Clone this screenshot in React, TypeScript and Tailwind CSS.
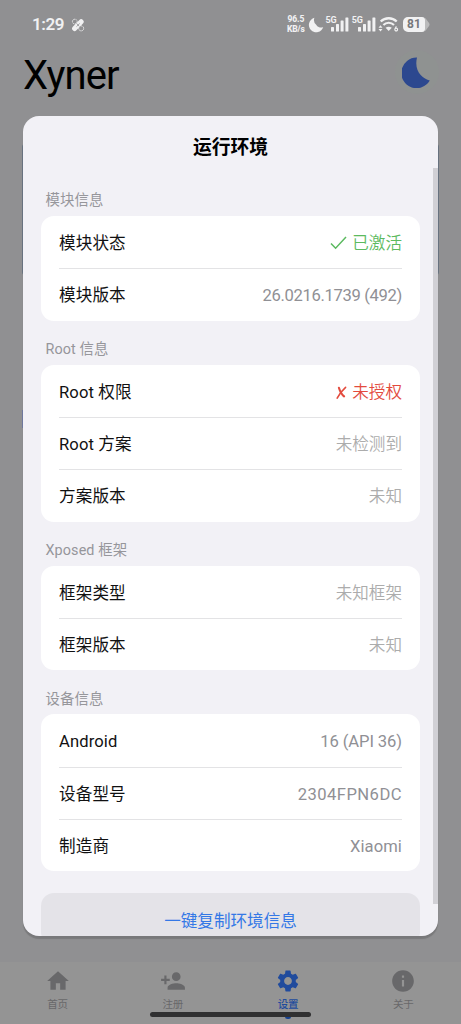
import type { ReactNode } from 'react';
import { MdHome, MdPersonAdd, MdSettings, MdInfo } from 'react-icons/md';

type Tone = 'value' | 'muted' | 'ok' | 'bad';

interface Row {
  label: string;
  value: string;
  tone: Tone;
  spacing?: string;
}

interface Section {
  title: string;
  rows: Row[];
}

const sections: Section[] = [
  {
    title: '模块信息',
    rows: [
      { label: '模块状态', value: '已激活', tone: 'ok' },
      { label: '模块版本', value: '26.0216.1739 (492)', tone: 'value', spacing: 'tracking-[-0.34px]' },
    ],
  },
  {
    title: 'Root 信息',
    rows: [
      { label: 'Root 权限', value: '未授权', tone: 'bad' },
      { label: 'Root 方案', value: '未检测到', tone: 'muted' },
      { label: '方案版本', value: '未知', tone: 'muted' },
    ],
  },
  {
    title: 'Xposed 框架',
    rows: [
      { label: '框架类型', value: '未知框架', tone: 'muted' },
      { label: '框架版本', value: '未知', tone: 'muted' },
    ],
  },
  {
    title: '设备信息',
    rows: [
      { label: 'Android', value: '16 (API 36)', tone: 'value', spacing: 'tracking-[-0.1px]' },
      { label: '设备型号', value: '2304FPN6DC', tone: 'value', spacing: 'tracking-[0.45px]' },
      { label: '制造商', value: 'Xiaomi', tone: 'value', spacing: 'tracking-[0.1px]' },
    ],
  },
];

const toneClass: Record<Tone, string> = {
  value: 'font-normal text-[#909095]',
  muted: 'font-[350] text-[#acacac]',
  ok: 'font-[350] text-[#5cba60]',
  bad: 'font-[350] text-[#e34b3e]',
};

function CheckMark() {
  return (
    <svg width="17" height="14" viewBox="0 0 17 14" className="-mt-[2px]" fill="none" stroke="#5cba60" strokeWidth="1.5">
      <path d="M1 7.4 5.6 12.2 16 1" />
    </svg>
  );
}

function BallotCross() {
  return (
    <svg width="11" height="14" viewBox="0 0 11 14" className="mt-px" fill="none" stroke="#e34b3e" strokeLinecap="round">
      <path d="M2.9 1.8C3.8 4.8 5.6 8.5 8.1 10.4" strokeWidth="2.1" />
      <path d="M9.6 1.4C6.4 4.2 3.4 8 1.2 12.2" strokeWidth="1.6" />
    </svg>
  );
}

function SignalBars() {
  return (
    <div className="relative h-[17px] w-[26.3px]">
      <svg width="26" height="17" viewBox="0 0 26 17" fill="#f1f1f2">
        <rect x="6" y="11" width="3" height="4.5" rx="0.6" />
        <rect x="11" y="8" width="3" height="7.5" rx="0.6" />
        <rect x="15.6" y="4.5" width="3" height="11" rx="0.6" />
        <rect x="20.4" y="1.5" width="3" height="14" rx="0.6" />
      </svg>
      <span className="absolute left-0 top-0 text-[9px] font-bold leading-[8px] text-[#f1f1f2]">5G</span>
    </div>
  );
}

function StatusBar() {
  return (
    <div className="flex h-12 items-center pl-8 pr-[31px] pt-px text-[#f1f1f2]">
      <span className="w-[36px] text-[17px] font-semibold leading-none tracking-[-0.4px]">1:29</span>
      <svg className="ml-[3px]" width="14" height="14" viewBox="0 0 14 14" fill="none" stroke="#f1f1f2">
        <circle cx="3.8" cy="3.6" r="2.4" strokeWidth="1" strokeDasharray="1.4 0.8" />
        <circle cx="10.2" cy="10.4" r="2.5" strokeWidth="1" strokeDasharray="1.4 0.8" />
        <path d="M3.6 10.5 10.2 3.7" strokeWidth="5" strokeLinecap="round" />
        <path d="M5.6 5.4 8.4 8.5M8.7 5.5 5.5 8.6" stroke="#919193" strokeWidth="0.8" />
      </svg>
      <div className="ml-auto flex items-center">
        <div className="flex w-[19px] flex-col items-center text-[8.5px] font-extrabold leading-[9.5px] tracking-[-0.1px]">
          <span>96.5</span>
          <span>KB/s</span>
        </div>
        <svg className="ml-[3px]" width="16" height="16" viewBox="0 0 16 16" fill="#f1f1f2">
          <path d="M6.4.8A7.3 7.3 0 1 0 15.2 9.9 5.5 5.5 0 0 1 8 7.5 6.2 6.2 0 0 1 6.4.8Z" />
        </svg>
        <div className="ml-px flex">
          <SignalBars />
          <SignalBars />
        </div>
        <svg width="21" height="17" viewBox="0 0 21 17" fill="none" stroke="#f1f1f2">
          <path d="M2.7 5.5A11.5 11.5 0 0 1 18.7 5.5" strokeWidth="2.3" />
          <path d="M5.4 9A7.4 7.4 0 0 1 16 9" strokeWidth="2.1" />
          <path d="M7.6 11.8Q10.7 9.5 13.8 11.8L10.7 15Z" fill="#f1f1f2" stroke="none" />
          <path d="M2.5 9.2 4.5 11.7H.5ZM2.5 15.6.5 13H4.5Z" fill="#f1f1f2" stroke="none" />
          <path d="M18.4 10.4 16.8 13M16.8 13.5a1.4 1.4 0 1 0 2.8 0 1.4 1.4 0 0 0-2.8 0Z" strokeWidth="1.1" />
        </svg>
        <div className="ml-[4px] flex items-center">
          <div className="h-[15px] w-[22px] rounded-l-[5px] rounded-r-[3px] bg-[#f1f1f2] text-center text-[12px] font-bold leading-[15.5px] text-[#77777a]">
            81
          </div>
          <svg width="5" height="13" viewBox="0 0 5 13" fill="#bababb">
            <path d="M0 0Q1 .5 1.8 2L4.2 5.2Q5 6.5 4.2 7.8L1.8 11Q1 12.5 0 13Z" />
          </svg>
        </div>
      </div>
    </div>
  );
}

function NavItem({ icon, label, active }: { icon: ReactNode; label: string; active?: boolean }) {
  return (
    <div className={`relative flex flex-1 flex-col items-center pt-[6px] ${active ? 'text-[#204b9d]' : 'text-[#68686a]'}`}>
      {icon}
      <span className={`mt-[4px] text-[10.5px] leading-[14px] ${active ? 'font-medium' : ''}`}>{label}</span>
      {active && <span className="absolute top-[51.5px] size-[5.5px] rounded-full bg-[#15408f]" />}
    </div>
  );
}

function InfoSection({ section }: { section: Section }) {
  return (
    <section>
      <h2 className="flex h-[44px] items-center pl-[4.5px] pt-[15px] text-[14.4px] leading-none tracking-[0.1px] text-[#96969b]">
        {section.title}
      </h2>
      <div className="rounded-[13px] bg-white px-[18px]">
        {section.rows.map((row, i) => (
          <div
            key={row.label}
            className={`flex h-[52.35px] items-center justify-between text-[16.6px] leading-none ${i > 0 ? 'border-t border-[#e3e3e5] pt-[3px]' : 'pt-[4px]'}`}
          >
            <span className="tracking-[0.1px] text-[#111112]">{row.label}</span>
            <span className={`flex items-center gap-[5px] ${toneClass[row.tone]} ${row.spacing ?? ''}`}>
              {row.tone === 'ok' && <CheckMark />}
              {row.tone === 'bad' && <BallotCross />}
              {row.value}
            </span>
          </div>
        ))}
      </div>
    </section>
  );
}

export default function App() {
  return (
    <div className="relative flex h-[1024px] w-[461px] flex-col overflow-hidden bg-[#909092] font-[Roboto,'Noto_Sans_CJK_SC',sans-serif]">
      <StatusBar />
      <header className="flex h-[56px] justify-between pl-[23px] pr-[22px]">
        <h1 className="pt-[8px] text-[40px] leading-none tracking-[-0.9px] text-black">Xyner</h1>
        <div className="mt-[2px] flex size-[44px] items-center justify-center rounded-full bg-[#8f9291] pr-[3px]">
          <svg width="28" height="31" viewBox="-0.5 0 28 31" fill="#2c488f">
            <path d="M14.5.6A15.3 15.3 0 1 0 27.3 23.6C20 21.5 11.2 14.3 14.5.6Z" />
          </svg>
        </div>
      </header>
      <main className="flex flex-1 flex-col px-[22px] pt-[40px]">
        <div className="h-[131px] rounded-[3px] bg-[#6a7482]" />
        <div className="mt-[135px] h-[18px] w-[80px] bg-[#717aa0]" />
      </main>
      <nav className="flex h-[62px] bg-[#949494]">
        <NavItem icon={<MdHome size={26} />} label="首页" />
        <NavItem icon={<MdPersonAdd size={26} />} label="注册" />
        <NavItem icon={<MdSettings size={26} />} label="设置" active />
        <NavItem icon={<MdInfo size={26} />} label="关于" />
      </nav>
      <div className="absolute bottom-[7.5px] left-[150px] h-[4.5px] w-[161px] rounded-full bg-[#303031]" />

      <div
        role="dialog"
        className="absolute left-[23px] top-[116px] h-[820px] w-[415px] overflow-hidden rounded-[16px] bg-[#f2f1f6] shadow-[0_3px_1px_rgba(0,0,0,0.16)]"
      >
        <h1 className="flex h-[56px] items-center justify-center pt-[8px] text-[18.8px] font-bold leading-none text-black">运行环境</h1>
        <div className="flex flex-col px-[18px]">
          {sections.map((s) => (
            <InfoSection key={s.title} section={s} />
          ))}
          <button className="mt-[22px] flex h-[52px] items-center justify-center rounded-[13px] bg-[#e4e3e8] pt-[5px] text-[16.6px] leading-none text-[#3478e6]">
            一键复制环境信息
          </button>
        </div>
        <div className="absolute right-0 top-[52px] h-[736px] w-[5px] bg-[#d1d0d5]" />
      </div>
    </div>
  );
}
